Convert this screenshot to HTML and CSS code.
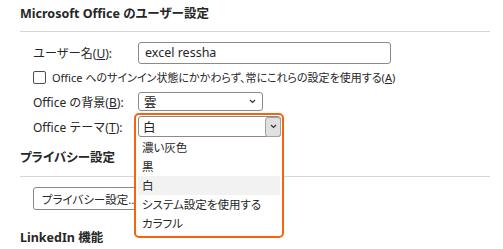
FILE: index.html
```html
<!DOCTYPE html>
<html lang="ja">
<head>
    <meta charset="UTF-8">
    <title>Microsoft Office のユーザー設定</title>
    <link rel="stylesheet" href="styles.css">
</head>
<body>
    <div class="page">
        <div class="section-title">Microsoft Office のユーザー設定</div>
        <div class="fields">
            <div class="row row-name">
                <label class="label">ユーザー名(<u>U</u>):</label>
                <div class="text-input">excel ressha</div>
            </div>
            <div class="row row-check">
                <span class="checkbox"></span>
                <span class="check-text">Office へのサインイン状態にかかわらず、常にこれらの設定を使用する(<u>A</u>)</span>
            </div>
            <div class="row row-bg">
                <label class="label">Office の背景(<u>B</u>):</label>
                <div class="select select-bg">
                    <span>雲</span>
                    <svg class="chevron" width="7" height="5" viewBox="0 0 7 5"><path d="M1 1 L3.5 3.5 L6 1" fill="none" stroke="#333" stroke-width="1.2"/></svg>
                </div>
            </div>
            <div class="row row-theme">
                <label class="label">Office テーマ(<u>T</u>):</label>
                <div class="theme-field">
                    <div class="dropdown">
                        <div class="select select-theme">
                            <span>白</span>
                            <span class="drop-btn">
                                <svg width="7" height="5" viewBox="0 0 7 5"><path d="M1 1 L3.5 3.5 L6 1" fill="none" stroke="#333" stroke-width="1.2"/></svg>
                            </span>
                        </div>
                        <ul class="options">
                            <li>濃い灰色</li>
                            <li>黒</li>
                            <li class="active">白</li>
                            <li>システム設定を使用する</li>
                            <li>カラフル</li>
                        </ul>
                    </div>
                </div>
            </div>
        </div>

        <div class="section-title privacy">プライバシー設定</div>
        <div class="fields">
            <button class="btn">プライバシー設定...</button>
        </div>

        <div class="section-title linkedin">LinkedIn 機能</div>
    </div>
</body>
</html>
```

FILE: styles.css
```css
* {
    margin: 0;
    padding: 0;
    box-sizing: border-box;
}

body {
    background: #ffffff;
    color: #262626;
    font-family: "Noto Sans", "Noto Sans CJK JP", sans-serif;
    font-size: 12px;
    width: 503px;
    height: 249px;
    overflow: hidden;
}

.page {
    padding: 4px 13px 0 20px;
}

.section-title {
    font-size: 12.5px;
    font-weight: bold;
    line-height: 20px;
    padding-bottom: 7px;
    border-bottom: 1px solid #d6d6d6;
    font-feature-settings: "palt";
}

.section-title.privacy {
    margin-top: 11px;
    padding-bottom: 8px;
}

.section-title.linkedin {
    margin-top: 18px;
    border-bottom: none;
}

.fields {
    padding-left: 13px;
}

.row {
    display: flex;
    align-items: center;
}

.row-name {
    margin-top: 10px;
    height: 22px;
}

.row-check {
    height: 26px;
    gap: 6px;
}

.check-text {
    font-size: 11px;
    font-feature-settings: "palt";
}

.row-bg {
    margin-top: 2px;
    height: 19px;
}

.row-theme {
    margin-top: 5px;
    height: 21px;
}

.label {
    width: 105px;
    flex-shrink: 0;
}

.text-input {
    width: 253px;
    height: 22px;
    border: 1px solid #8a8a8a;
    border-radius: 3px;
    padding: 0 6px;
    line-height: 20px;
    font-size: 12.5px;
}

.checkbox {
    width: 13px;
    height: 13px;
    border: 1px solid #4d4d4d;
    border-radius: 2px;
    flex-shrink: 0;
}

.select {
    display: flex;
    align-items: center;
    justify-content: space-between;
    border: 1px solid #8a8a8a;
    border-radius: 3px;
    background: #ffffff;
    font-size: 12.5px;
}

.select-bg {
    width: 125px;
    height: 19px;
    padding: 0 6px 0 5px;
}

.theme-field {
    position: relative;
    width: 143px;
    height: 21px;
}

.dropdown {
    position: absolute;
    top: -3px;
    left: -4px;
    width: 150px;
    height: 125px;
    border: 2px solid #f7630c;
    border-radius: 5px;
    background: #ffffff;
    padding: 1px 1px 0 2px;
}

.select-theme {
    height: 21px;
    padding-left: 4px;
}

.drop-btn {
    display: flex;
    align-items: center;
    justify-content: center;
    width: 16px;
    height: 20px;
    background: #e0e0e0;
    border: 1px solid #a0a0a0;
    border-radius: 3px;
    margin-right: -1px;
}

.options {
    list-style: none;
    margin-top: 1px;
    width: 142px;
    font-size: 11.5px;
    font-feature-settings: "palt";
}

.options li {
    height: 19px;
    line-height: 19px;
    padding-left: 4px;
    white-space: nowrap;
}

.options li.active {
    background: #f2f2f2;
}

.btn {
    margin-top: 10px;
    height: 23px;
    padding: 0 8px;
    border: 1px solid #8a8a8a;
    border-radius: 3px;
    background: #ffffff;
    color: #262626;
    font-family: inherit;
    font-size: 11.5px;
    font-feature-settings: "palt";
}
```
